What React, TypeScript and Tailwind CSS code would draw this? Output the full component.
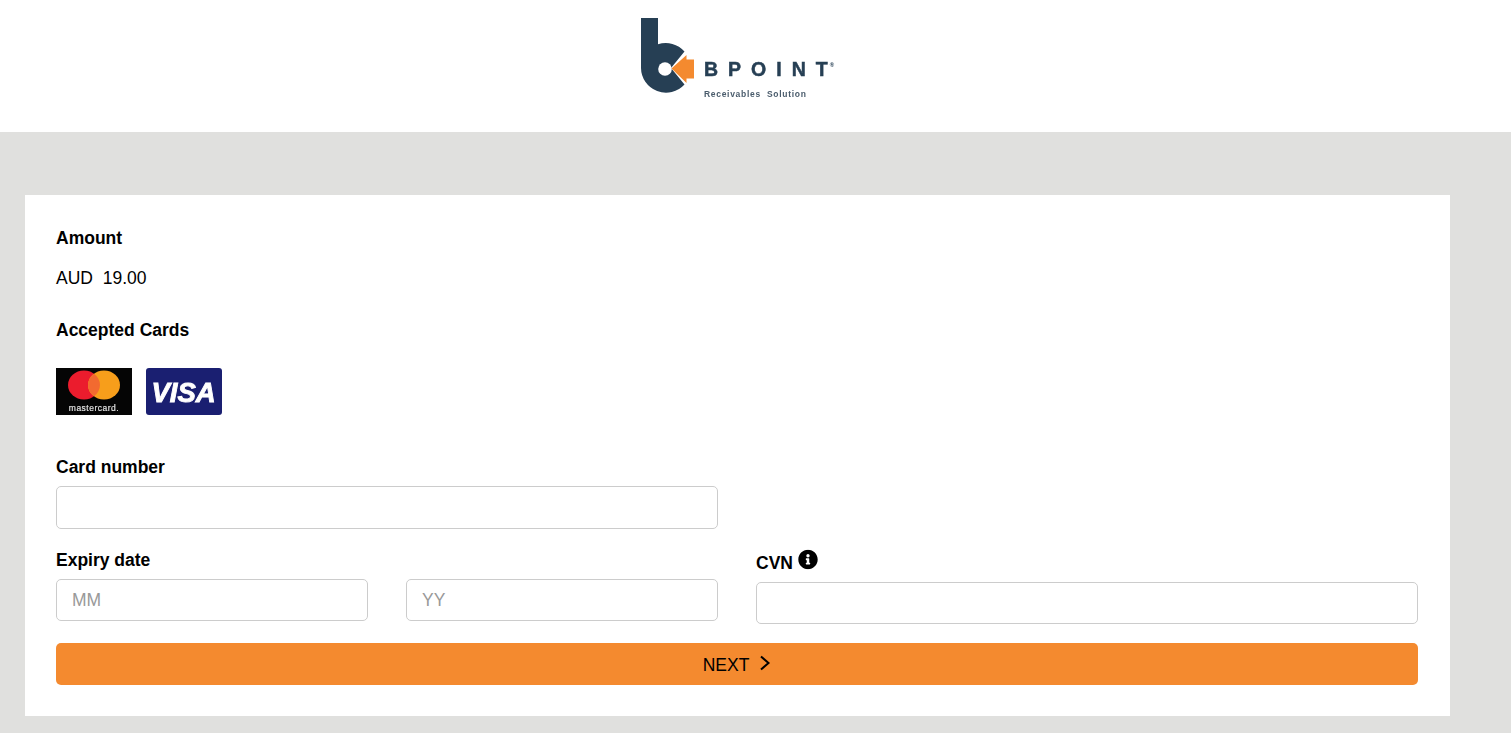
import React from "react";
import { FaInfoCircle } from "react-icons/fa";

const inputCls = "block w-full h-[42px] rounded-[5px] border border-[#cccccc] bg-white px-[15px] text-[17.5px] outline-none placeholder:text-[#999999]";
const labelCls = "block font-bold text-[17.5px] leading-[20px] text-black";

function Logo() {
  return (
    <svg width="200" height="90" viewBox="636 14 200 90" className="blur-[0.4px]">
      <path fill="#263f54" d="M641 18h17v26.300A25 25 0 0 1 684.500 51.500L671 68 684.500 84.500A25 25 0 0 1 641 68z" />
      <circle cx="665" cy="69" r="6.800" fill="#ffffff" />
      <path fill="#f48a2f" d="M671.500 68.500 686.500 55v4.500h7.500v19h-7.500v4.500z" />
      <text x="704" y="75.500" fontFamily="'Liberation Sans',Arial,sans-serif" fontWeight="700" fontSize="19.500" stroke="#263f54" strokeWidth="0.5" fill="#263f54">
        <tspan letterSpacing="10">BPOIN</tspan>
        <tspan>T</tspan>
        <tspan dx="2" dy="-9" fontSize="6" strokeWidth="0">®</tspan>
      </text>
      <text x="704" y="97" fontFamily="'Liberation Sans',Arial,sans-serif" fontWeight="700" fontSize="8.500" letterSpacing="0.700" fill="#4a5c6c" xmlSpace="preserve">Receivables  Solution</text>
    </svg>
  );
}

function Mastercard() {
  return (
    <svg width="76" height="47" viewBox="0 0 76 47">
      <rect width="76" height="47" fill="#050505" />
      <g className="blur-[0.3px]">
        <ellipse cx="28" cy="17" rx="16" ry="14.500" fill="#eb1c2d" />
        <ellipse cx="48" cy="17" rx="16" ry="14.500" fill="#f79e1b" />
        <path fill="#f26a30" d="M38 5.700a16 14.500 0 0 1 0 22.600 16 14.500 0 0 1 0-22.600z" />
        <text x="38" y="43" textAnchor="middle" fontFamily="'Liberation Sans',Arial,sans-serif" fontWeight="400" fontSize="8.500" letterSpacing="0.500" stroke="#dddddd" strokeWidth="0.2" fill="#e8e8e8">mastercard.</text>
      </g>
    </svg>
  );
}

function Visa() {
  return (
    <svg width="76" height="47" viewBox="0 0 76 47">
      <rect width="76" height="47" rx="3" fill="#1a1f71" />
      <text x="37.500" y="34" textAnchor="middle" fontFamily="'Liberation Sans',Arial,sans-serif" fontWeight="700" fontStyle="italic" fontSize="27.500" stroke="#ffffff" strokeWidth="0.9" fill="#ffffff" className="blur-[0.4px]">VISA</text>
    </svg>
  );
}

export default function App() {
  return (
    <div className="min-h-[733px] bg-[#e0e0de] font-['Liberation_Sans',Arial,sans-serif] text-black">
      <header className="flex h-[132px] justify-center bg-white pt-[14px]">
        <div className="ml-[-39px]"><Logo /></div>
      </header>
      <main className="pt-[63px] pl-[25px] pr-[61px] pb-[17px]">
        <section className="bg-white pt-[33px] pb-[31px] pl-[31px] pr-[32px]">
          <h2 className={labelCls}>Amount</h2>
          <p className="mt-[20px] text-[17.5px] leading-[20px] whitespace-pre">AUD  19.00</p>
          <h2 className={`${labelCls} mt-[32px]`}>Accepted Cards</h2>
          <div className="mt-[28px] flex gap-[14px]">
            <Mastercard />
            <Visa />
          </div>
          <div className="mt-[42px] grid grid-cols-2 gap-x-[38px]">
            <div>
              <label className={labelCls}>Card number</label>
              <input className={`${inputCls} mt-[9px] h-[43px]`} />
            </div>
            <div />
          </div>
          <div className="mt-[21px] grid grid-cols-2 gap-x-[38px]">
            <div>
              <label className={labelCls}>Expiry date</label>
              <div className="mt-[9px] grid grid-cols-2 gap-x-[38px]">
                <input className={inputCls} placeholder="MM" />
                <input className={inputCls} placeholder="YY" />
              </div>
            </div>
            <div>
              <label className={`${labelCls} flex items-end gap-[5px]`}>
                <span className="translate-y-[3px]">CVN</span>
                <FaInfoCircle className="size-[20px] -translate-y-[0.5px]" />
              </label>
              <input className={`${inputCls} mt-[12px]`} />
            </div>
          </div>
          <button className="mt-[19px] flex h-[42px] w-full items-center justify-center gap-[10px] rounded-[5px] bg-[#f48a2f] text-[17.5px] text-black">
            <span className="translate-y-[0.5px]">NEXT</span>
            <svg width="12" height="16" viewBox="0 0 12 16" fill="none" stroke="#000" strokeWidth="2" className="-translate-y-[1px]">
              <path d="M2 1.500 9.500 8 2 14.500" />
            </svg>
          </button>
        </section>
      </main>
    </div>
  );
}
